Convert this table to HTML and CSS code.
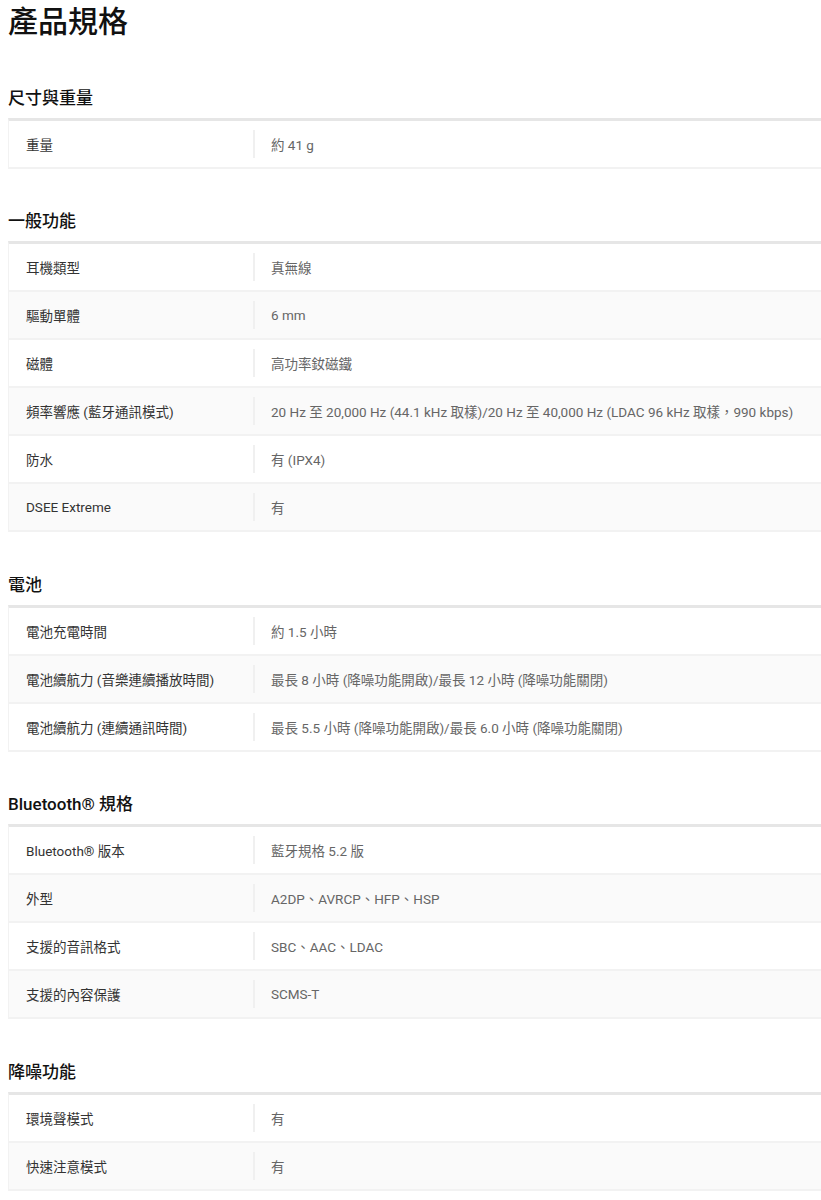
FILE: index.html
```html
<!DOCTYPE html>
<html lang="zh-Hant">
<head>
    <meta charset="UTF-8">
    <meta name="viewport" content="width=device-width, initial-scale=1.0">
    <title>產品規格</title>
    <link rel="stylesheet" href="styles.css">
</head>
<body>
    <h1 class="page-title">產品規格</h1>

    <section class="spec-section">
        <h2 class="spec-heading">尺寸與重量</h2>
        <div class="spec-table">
            <div class="spec-row"><div class="spec-label">重量</div><div class="spec-value">約 41 g</div></div>
        </div>
    </section>

    <section class="spec-section">
        <h2 class="spec-heading">一般功能</h2>
        <div class="spec-table">
            <div class="spec-row"><div class="spec-label">耳機類型</div><div class="spec-value">真無線</div></div>
            <div class="spec-row"><div class="spec-label">驅動單體</div><div class="spec-value">6 mm</div></div>
            <div class="spec-row"><div class="spec-label">磁體</div><div class="spec-value">高功率釹磁鐵</div></div>
            <div class="spec-row"><div class="spec-label">頻率響應 (藍牙通訊模式)</div><div class="spec-value">20 Hz 至 20,000 Hz (44.1 kHz 取樣)/20 Hz 至 40,000 Hz (LDAC 96 kHz 取樣，990 kbps)</div></div>
            <div class="spec-row"><div class="spec-label">防水</div><div class="spec-value">有 (IPX4)</div></div>
            <div class="spec-row"><div class="spec-label">DSEE Extreme</div><div class="spec-value">有</div></div>
        </div>
    </section>

    <section class="spec-section">
        <h2 class="spec-heading">電池</h2>
        <div class="spec-table">
            <div class="spec-row"><div class="spec-label">電池充電時間</div><div class="spec-value">約 1.5 小時</div></div>
            <div class="spec-row"><div class="spec-label">電池續航力 (音樂連續播放時間)</div><div class="spec-value">最長 8 小時 (降噪功能開啟)/最長 12 小時 (降噪功能關閉)</div></div>
            <div class="spec-row"><div class="spec-label">電池續航力 (連續通訊時間)</div><div class="spec-value">最長 5.5 小時 (降噪功能開啟)/最長 6.0 小時 (降噪功能關閉)</div></div>
        </div>
    </section>

    <section class="spec-section">
        <h2 class="spec-heading">Bluetooth® 規格</h2>
        <div class="spec-table">
            <div class="spec-row"><div class="spec-label">Bluetooth® 版本</div><div class="spec-value">藍牙規格 5.2 版</div></div>
            <div class="spec-row"><div class="spec-label">外型</div><div class="spec-value">A2DP、AVRCP、HFP、HSP</div></div>
            <div class="spec-row"><div class="spec-label">支援的音訊格式</div><div class="spec-value">SBC、AAC、LDAC</div></div>
            <div class="spec-row"><div class="spec-label">支援的內容保護</div><div class="spec-value">SCMS-T</div></div>
        </div>
    </section>

    <section class="spec-section">
        <h2 class="spec-heading">降噪功能</h2>
        <div class="spec-table">
            <div class="spec-row"><div class="spec-label">環境聲模式</div><div class="spec-value">有</div></div>
            <div class="spec-row"><div class="spec-label">快速注意模式</div><div class="spec-value">有</div></div>
        </div>
    </section>
</body>
</html>
```

FILE: styles.css
```css
body {
    margin: 0 0 0 8px;
    font-family: Roboto, "Noto Sans CJK TC", sans-serif;
    color: #333;
    background-color: #fff;
}
.page-title {
    margin: 4px 0 0 0;
    padding-bottom: 5px;
    font-size: 30px;
    line-height: 36px;
    font-weight: 500;
    color: #111;
}
.spec-section {
    margin-top: 40.5px;
}
.spec-heading {
    margin: 0 0 8px 0;
    font-size: 17px;
    line-height: 24px;
    font-weight: 500;
    color: #111;
}
.spec-table {
    border-top: 3px solid #e6e6e6;
    border-left: 1px solid #f2f2f2;
}
.spec-row {
    display: flex;
    align-items: center;
    height: 46px;
    border-bottom: 2px solid #f2f2f2;
    font-size: 13.5px;
}
.spec-row:nth-child(even) {
    background-color: #fafafa;
}
.spec-label {
    width: 227px;
    padding-left: 17px;
    color: #333;
    white-space: nowrap;
}
.spec-value {
    flex: 1;
    align-self: stretch;
    display: flex;
    align-items: center;
    margin: 9px 0;
    padding-left: 16px;
    border-left: 2px solid #f0f0f0;
    color: #666;
    white-space: nowrap;
}
```
